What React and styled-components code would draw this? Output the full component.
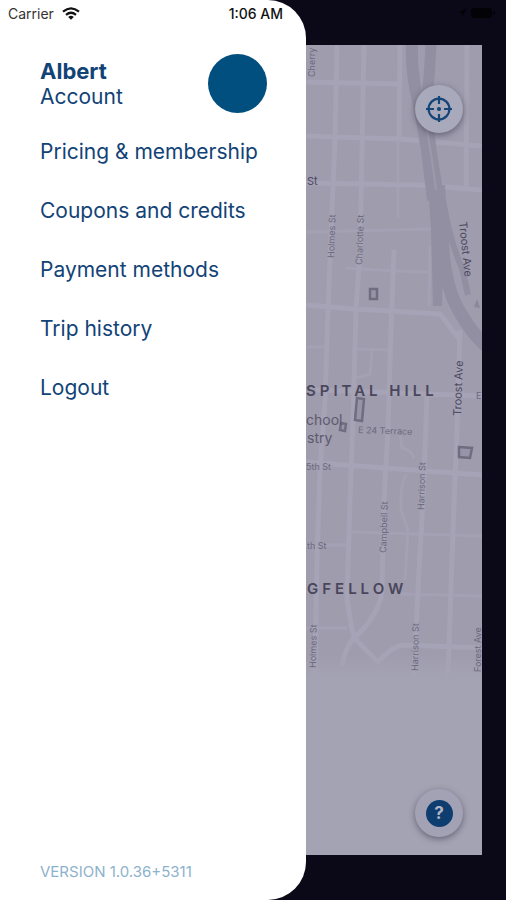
import React from "react";
import styled, { createGlobalStyle } from "styled-components";

const GlobalStyle = createGlobalStyle`
  * {
    box-sizing: border-box;
  }
  body {
    margin: 0;
    background: #0b0917;
    font-family: Inter, "Liberation Sans", sans-serif;
  }
`;

const Screen = styled.div`
  display: flex;
  min-height: 100vh;
  background: #0b0917;
`;

const Drawer = styled.aside`
  flex: 1;
  display: flex;
  flex-direction: column;
  background: #fff;
  border-radius: 0 38px 38px 0;
`;

const StatusBar = styled.header`
  display: flex;
  align-items: center;
  height: 26px;
  gap: 8px;
  padding: 0 23px 0 8px;
  font-size: 14px;
  color: #333;
`;

const Clock = styled.time`
  margin-left: auto;
  font-weight: 500;
  color: #111;
`;

const Profile = styled.a`
  display: flex;
  align-items: center;
  justify-content: space-between;
  margin-top: 28px;
  padding: 0 39px 0 40px;
  color: #124377;
  text-decoration: none;
`;

const ProfileText = styled.div`
  display: flex;
  flex-direction: column;
  font-size: 21px;
  line-height: 25px;
`;

const Name = styled.strong`
  font-size: 22px;
  font-weight: 700;
`;

const Avatar = styled.span`
  width: 59px;
  height: 59px;
  border-radius: 50%;
  background: #004f7e;
`;

const Menu = styled.nav`
  display: flex;
  flex-direction: column;
  gap: 29px;
  padding: 24px 40px;
`;

const MenuLink = styled.a`
  font-size: 21px;
  line-height: 30px;
  white-space: nowrap;
  color: #124377;
  text-decoration: none;
`;

const Version = styled.footer`
  margin-top: auto;
  padding: 0 40px 18px;
  font-size: 15px;
  line-height: 20px;
  color: #8db2cc;
`;

const Backdrop = styled.main`
  display: flex;
  flex-direction: column;
  width: 200px;
  padding: 0 24px 45px 0;
`;

const DimStatus = styled.div`
  display: flex;
  justify-content: flex-end;
  height: 45px;
  margin-right: -14px;
  padding-top: 7px;
`;

const MapPanel = styled.section`
  position: relative;
  flex: 1;
  display: flex;
  overflow: hidden;
  background: #a4a3b3;
`;

const Controls = styled.div`
  position: absolute;
  inset: 40px 19px 18px auto;
  display: flex;
  flex-direction: column;
  justify-content: space-between;
`;

const RoundButton = styled.button`
  display: grid;
  place-items: center;
  width: 48px;
  height: 48px;
  padding: 0;
  border: 0;
  border-radius: 50%;
  background: ${(props) => props.$bg};
  box-shadow: 0 2px 6px rgba(40, 36, 62, 0.5);
`;

const MapSvg = styled.svg`
  display: block;
  width: 100%;
  height: 810px;
  font-family: Inter, "Liberation Sans", sans-serif;

  .road {
    fill: none;
    stroke: #a5a3b5;
    stroke-width: 5;
  }
  .minor {
    fill: none;
    stroke: #a3a1b3;
    stroke-width: 3;
  }
  .highway {
    fill: none;
    stroke: #928fa2;
  }
  .building {
    fill: #9794a7;
    stroke: #706d80;
    stroke-width: 2.5;
  }
  text {
    font-size: 9px;
    fill: #6d697d;
  }
  .avenue {
    font-size: 11px;
    fill: #4c485e;
  }
  .place {
    font-size: 14px;
    fill: #5d596f;
  }
  .district {
    font-size: 15px;
    font-weight: 600;
    letter-spacing: 4px;
    fill: #4a465c;
  }
`;

const roads = [
  "M337 45L335 140L332 210L328 310L325 400L320 470L317 560L315 675",
  "M364 45L362 150L360 250L356 310L353 420L350 500L347 600L352 630Q356 642 362 645",
  "M400 45L399 140",
  "M394 250L391 330L388 430L384 500L382 590Q380 615 352 640Q344 652 342 666",
  "M352 636L378 662Q392 646 404 645L482 648",
  "M467 45L466 190",
  "M460 330L457 430L453 530L448 675",
  "M427 395L424 480L418 590L414 675",
  "M306 82L400 84",
  "M306 136L400 139L482 146",
  "M306 183L420 185L482 190",
  "M306 305L354 309L440 314L460 340",
  "M306 462L385 468L482 475",
  "M316 390L482 396",
];

const minorRoads = [
  "M398 140L398 218",
  "M306 232L432 229",
  "M345 268L394 271L428 272",
  "M430 246L429 306",
  "M306 347L326 347",
  "M355 349L391 350",
  "M372 351L370 374L356 378",
  "M352 532L482 536",
  "M306 545L347 545",
  "M400 594L482 596",
  "M306 628L347 628",
  "M400 435L402 448Q412 450 414 458",
  "M407 475Q400 480 401 510L408 530L405 580",
  "M448 97L462 97",
];

const labels = [
  { text: "Cherry", at: "315 77", turn: -90 },
  { text: "Holmes St", at: "334 258", turn: -88 },
  { text: "Charlotte St", at: "362 265", turn: -88 },
  { text: "E 24 Terrace", at: "358 433", turn: 2 },
  { text: "Harrison St", at: "424 510", turn: -88 },
  { text: "Campbell St", at: "386 553", turn: -88 },
  { text: "Holmes St", at: "316 668", turn: -89 },
  { text: "Harrison St", at: "418 671", turn: -89 },
  { text: "Forest Ave", at: "481 672", turn: -90 },
  { text: "5th St", at: "306 470", turn: 0 },
  { text: "th St", at: "307 549", turn: 0 },
  { text: "E", at: "476 399", turn: 0 },
  { text: "Troost Ave", at: "459 222", turn: 84, type: "avenue" },
  { text: "Troost Ave", at: "461 416", turn: -88, type: "avenue" },
  { text: "St", at: "307 185", turn: 0, type: "avenue" },
  { text: "chool", at: "306 425", turn: 0, type: "place" },
  { text: "stry", at: "307 443", turn: 0, type: "place" },
  { text: "SPITAL HILL", at: "306 396", turn: 0, type: "district" },
  { text: "GFELLOW", at: "307 594", turn: 0, type: "district" },
];

const menuItems = [
  "Pricing & membership",
  "Coupons and credits",
  "Payment methods",
  "Trip history",
  "Logout",
];

const WifiIcon = () => (
  <svg width="18" height="13" viewBox="0 0 18 13" aria-hidden="true">
    <g fill="none" stroke="#111" strokeWidth="2.2">
      <path d="M1 4.7Q9-2 17 4.7" />
      <path d="M4 7.8Q9 3.7 14 7.8" />
    </g>
    <path d="M9 12.8L6.2 10Q9 7.7 11.8 10Z" fill="#111" />
  </svg>
);

const CrosshairIcon = () => (
  <svg width="26" height="26" viewBox="0 0 26 26" aria-hidden="true">
    <g fill="none" stroke="#164577" strokeWidth="2.2">
      <circle cx="13" cy="13" r="10.4" />
      <path d="M13 0V8M13 18V26M0 13H8M18 13H26" />
    </g>
    <circle cx="13" cy="13" r="2.1" fill="#164577" />
  </svg>
);

const HelpBadge = styled.span`
  display: grid;
  place-items: center;
  width: 27px;
  height: 27px;
  border-radius: 50%;
  background: #0e3d70;
  color: #b4b4c6;
  font: 700 17px/27px Inter, "Liberation Sans", sans-serif;
`;

const StreetMap = () => (
  <MapSvg
    viewBox="306 45 176 810"
    preserveAspectRatio="xMaxYMin slice"
    role="img"
    aria-label="Street map"
  >
    <defs>
      <linearGradient id="fade" x1="0" y1="0" x2="0" y2="1">
        <stop offset="0.96" stopColor="#a4a3b3" stopOpacity="0" />
        <stop offset="1" stopColor="#a4a3b3" />
      </linearGradient>
    </defs>
    <rect x="306" y="45" width="176" height="635" fill="#9f9cae" />
    {minorRoads.map((d) => (
      <path key={d} className="minor" d={d} />
    ))}
    {roads.map((d) => (
      <path key={d} className="road" d={d} />
    ))}
    <path className="highway" strokeWidth="12" d="M412 45Q411 75 419 105L427 150L433 200" />
    <path className="highway" strokeWidth="11" d="M431 45Q430 75 426 105L431 150L439 200L446 240" />
    <path fill="#928fa2" d="M428 185L445 185L448 235L443 270L442 306L433 306L431 230Z" />
    <path className="highway" strokeWidth="13" d="M442 225Q442 285 461 314Q471 332 486 346" />
    <path className="highway" strokeWidth="6" d="M443 200Q450 242 462 268L468 295" />
    <path fill="none" stroke="#9c99ab" strokeWidth="2" d="M427 130L432 160L436 190" />
    <path fill="#8b889b" d="M474 307L477 299L480 308Z" />
    <rect x="306" y="45" width="176" height="635" fill="url(#fade)" />
    <rect className="building" x="370" y="289" width="7" height="10" />
    <path className="building" d="M357 398L364 399L362 421L355 420Z" />
    <path className="building" d="M341 423L346 424L345 431L340 430Z" />
    <path className="building" d="M459 447L472 448L470 458L459 457Z" />
    {labels.map(({ text, at, turn, type }) => (
      <text
        key={text + at}
        className={type}
        transform={`translate(${at}) rotate(${turn})`}
      >
        {text}
      </text>
    ))}
  </MapSvg>
);

const App = () => {
  return (
    <>
      <GlobalStyle />
      <Screen>
        <Drawer>
          <StatusBar>
            <span>Carrier</span>
            <WifiIcon />
            <Clock>1:06 AM</Clock>
          </StatusBar>
          <Profile href="#account">
            <ProfileText>
              <Name>Albert</Name>
              <span>Account</span>
            </ProfileText>
            <Avatar />
          </Profile>
          <Menu>
            {menuItems.map((item) => (
              <MenuLink key={item} href="#menu">
                {item}
              </MenuLink>
            ))}
          </Menu>
          <Version>VERSION 1.0.36+5311</Version>
        </Drawer>
        <Backdrop>
          <DimStatus>
            <svg width="38" height="12" viewBox="0 0 38 12" aria-hidden="true">
              <path d="M0 6L9 1L4 10V6Z" fill="#030207" />
              <rect x="13" y="1" width="21" height="10" rx="3" fill="#030207" />
              <rect x="35" y="4" width="2" height="4" rx="1" fill="#030207" />
            </svg>
          </DimStatus>
          <MapPanel>
            <StreetMap />
            <Controls>
              <RoundButton type="button" aria-label="My location" $bg="#a8a9bb">
                <CrosshairIcon />
              </RoundButton>
              <RoundButton type="button" aria-label="Help" $bg="#a3a2b4">
                <HelpBadge>?</HelpBadge>
              </RoundButton>
            </Controls>
          </MapPanel>
        </Backdrop>
      </Screen>
    </>
  );
};

export default App;
